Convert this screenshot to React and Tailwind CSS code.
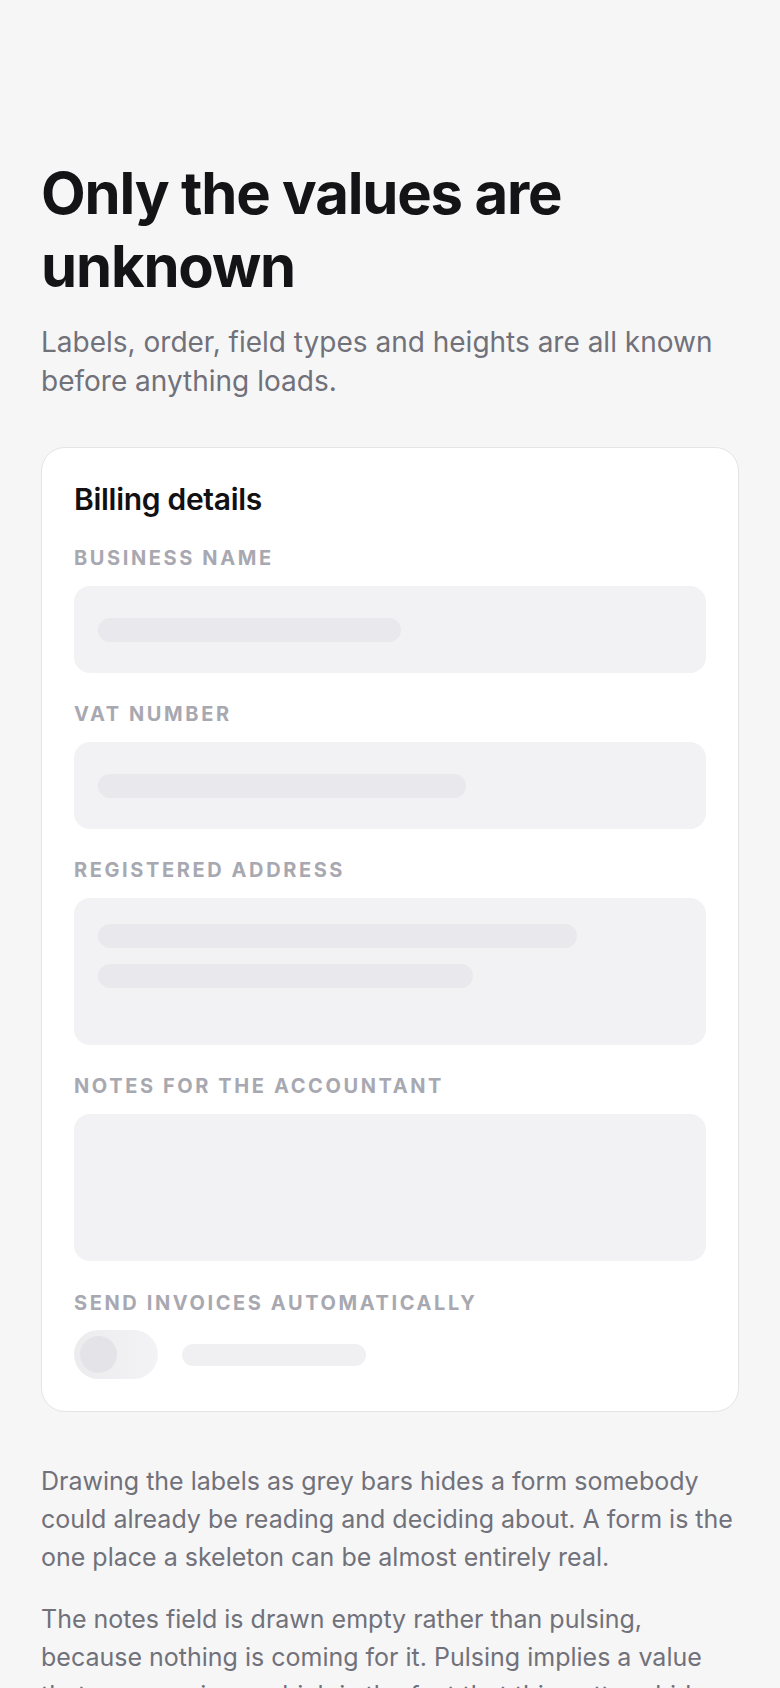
const Label = ({ children }) => (
  <div className="text-[20px] leading-6 font-bold uppercase tracking-[0.13em] text-[#a8a8b1]">
    {children}
  </div>
);

const Bar = ({ width, className = '' }) => (
  <div className={`h-6 rounded-full bg-[#e9e9ed] ${className}`} style={{ width }} />
);

export default function App() {
  return (
    <div className="min-h-screen bg-[#f6f6f7] font-['Inter',sans-serif]">
      <div className="px-[41px] pt-[157px] pb-16">
        {/* Header */}
        <h1 className="text-[58px] leading-[72.5px] font-bold tracking-[-0.02em] text-[#141417]">
          Only the values are unknown
        </h1>
        <p className="mt-[21px] text-[28px] leading-[39px] text-[#71717a]">
          Labels, order, field types and heights are all known before anything loads.
        </p>

        {/* Skeleton form */}
        <div className="mt-[46px] bg-white border border-[#e4e4e7] rounded-3xl p-8">
          <h2 className="text-[30px] leading-[38px] font-semibold tracking-[-0.01em] text-[#111113]">
            Billing details
          </h2>

          <div className="mt-7">
            <Label>Business name</Label>
            <div className="mt-4 h-[87px] rounded-2xl bg-[#f2f2f4] px-6 flex items-center">
              <Bar width={303} />
            </div>
          </div>

          <div className="mt-[29px]">
            <Label>VAT number</Label>
            <div className="mt-4 h-[87px] rounded-2xl bg-[#f2f2f4] px-6 flex items-center">
              <Bar width={368} />
            </div>
          </div>

          <div className="mt-[29px]">
            <Label>Registered address</Label>
            <div className="mt-4 h-[147px] rounded-2xl bg-[#f2f2f4] px-6 pt-[26px] flex flex-col gap-4">
              <Bar width={479} />
              <Bar width={375} />
            </div>
          </div>

          <div className="mt-[29px]">
            <Label>Notes for the accountant</Label>
            <div className="mt-4 h-[147px] rounded-2xl bg-[#f2f2f4]" />
          </div>

          <div className="mt-[30px]">
            <Label>Send invoices automatically</Label>
            <div className="mt-[15px] flex items-center">
              <div className="w-[84px] h-[49px] rounded-full bg-gradient-to-r from-[#ececef] to-[#f3f3f5] p-[6px] flex items-center">
                <div className="w-[37px] h-[37px] rounded-full bg-[#e4e4e8]" />
              </div>
              <div className="ml-6 w-[184px] h-[22px] rounded-full bg-[#f0f0f2]" />
            </div>
          </div>
        </div>

        {/* Notes */}
        <div className="mt-[50px] max-w-[692px] space-y-6 text-[25px] leading-[38px] text-[#71717a]">
          <p>
            Drawing the labels as grey bars hides a form somebody could already be reading and
            deciding about. A form is the one place a skeleton can be almost entirely real.
          </p>
          <p>
            The notes field is drawn empty rather than pulsing, because nothing is coming for it.
            Pulsing implies a value that never arrives, which is the fact that this pattern hides.
          </p>
        </div>
      </div>
    </div>
  );
}
